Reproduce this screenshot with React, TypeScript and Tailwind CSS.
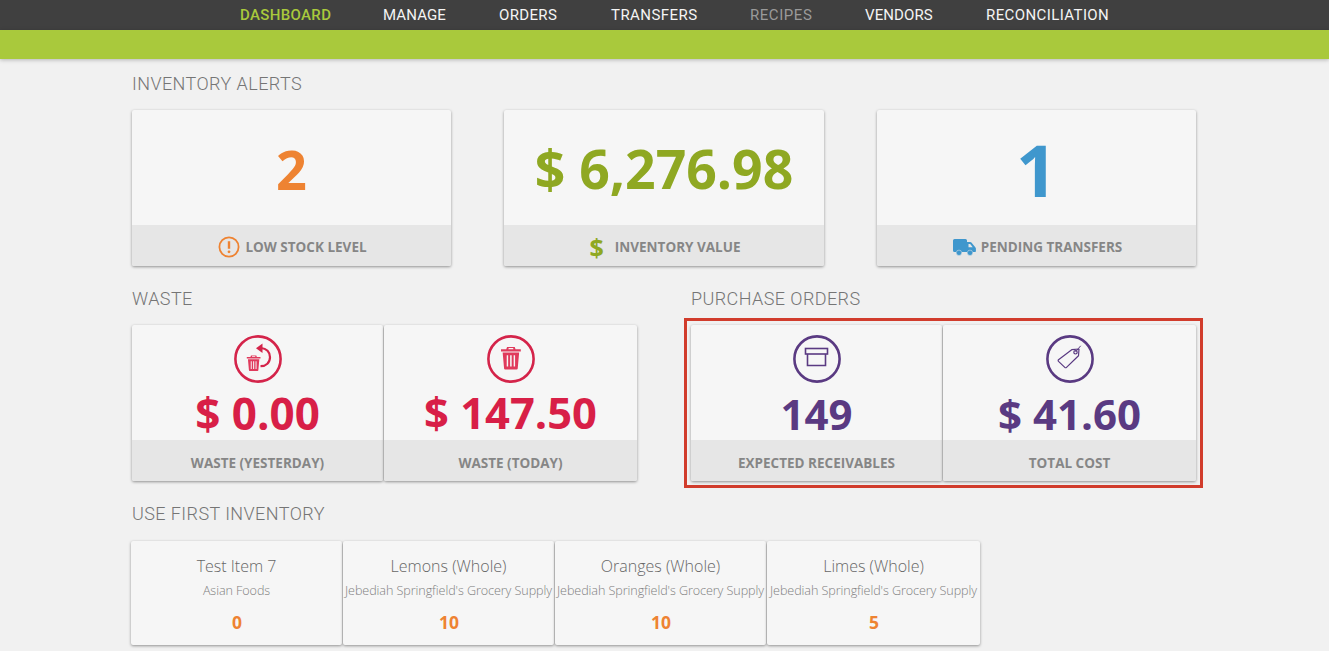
import type { ReactNode } from "react";

const navItems = [
  { label: "DASHBOARD", className: "w-[143px] text-[#a9c93c] font-medium" },
  { label: "MANAGE", className: "w-[116px] text-[#f4f4f4] tracking-[0.1px]" },
  { label: "ORDERS", className: "w-[112px] text-[#f4f4f4]" },
  { label: "TRANSFERS", className: "w-[139px] text-[#f4f4f4] tracking-[0.45px]" },
  { label: "RECIPES", className: "w-[115px] text-[#9a9a9a] tracking-[0.55px]" },
  { label: "VENDORS", className: "w-[121px] text-[#f4f4f4] tracking-[0.1px]" },
  { label: "RECONCILIATION", className: "w-[130px] text-[#f4f4f4] tracking-[0.4px]" },
];

const firstItems = [
  { name: "Test Item 7", vendor: "Asian Foods", qty: "0", width: "w-[211px]" },
  { name: "Lemons (Whole)", vendor: "Jebediah Springfield's Grocery Supply", qty: "10", width: "w-[211px]" },
  { name: "Oranges (Whole)", vendor: "Jebediah Springfield's Grocery Supply", qty: "10", width: "w-[211px]" },
  { name: "Limes (Whole)", vendor: "Jebediah Springfield's Grocery Supply", qty: "5", width: "w-[213px]" },
];

function Heading({ children }: { children: ReactNode }) {
  return (
    <h2 className="font-['Roboto',sans-serif] text-[18px] leading-[22px] font-light tracking-[0.42px] text-[#757575]">
      {children}
    </h2>
  );
}

function AlertIcon() {
  return (
    <svg width="22" height="22" viewBox="0 0 22 22" fill="none">
      <circle cx="11" cy="11" r="9.6" stroke="#ee8332" strokeWidth="1.8" />
      <path d="M11 5.2v7.6" stroke="#ee8332" strokeWidth="2.4" />
      <circle cx="11" cy="15.8" r="1.4" fill="#ee8332" />
    </svg>
  );
}

function TruckIcon() {
  return (
    <svg width="23" height="17" viewBox="0 0 23 17">
      <path
        d="M1.500 0h11A1.500 1.500 0 0 1 14 1.500V3h3.200c.5 0 .9.200 1.200.6l3.900 4.600c.4.400.6.900.6 1.400V12c0 .6-.4 1-1 1h-2a3 3 0 0 1-5.900 0H8.900A3 3 0 0 1 3 13H1.500A1.500 1.500 0 0 1 0 11.500v-10A1.500 1.500 0 0 1 1.500 0Z"
        fill="#3f97cd"
      />
      <path d="M15.500 5h1.700l2.500 3.200h-4.200Z" fill="#e6e6e6" />
      <circle cx="6" cy="13.800" r="2.700" fill="#3f97cd" stroke="#e6e6e6" strokeWidth="0.5" />
      <circle cx="17" cy="13.800" r="2.700" fill="#3f97cd" stroke="#e6e6e6" strokeWidth="0.5" />
    </svg>
  );
}

function Ring({ color, children }: { color: string; children: ReactNode }) {
  return (
    <svg width="48" height="48" viewBox="0 0 48 48" fill="none">
      <circle cx="24" cy="24" r="22.600" stroke={color} strokeWidth="2.600" />
      {children}
    </svg>
  );
}

function Bin({ x, y, s }: { x: number; y: number; s: number }) {
  return (
    <g transform={`translate(${x} ${y}) scale(${s})`} fill="#e03a5c">
      <path d="M5.500 0h7l.7 2H18v2H0V2h4.800ZM7 1l-.3 1h4.600l-.3-1Z" />
      <path d="M1.500 5h15l-1.300 14.500a1 1 0 0 1-1 .9H3.800a1 1 0 0 1-1-.9ZM5.200 7.500v10.300h1.300V7.500Zm3.100 0v10.300h1.400V7.500Zm3.200 0v10.300h1.300V7.500Z" fillRule="evenodd" />
    </g>
  );
}

function WasteBackIcon() {
  return (
    <Ring color="#d4244a">
      <Bin x={12.800} y={20.500} s={0.76} />
      <path d="M27 13c5.500.3 9 4.200 9 9.200 0 5.300-3.800 9-9.500 9" stroke="#d4244a" strokeWidth="2.200" />
      <path d="M28.500 8.500v9.600L22 13.200Z" fill="#d4244a" />
    </Ring>
  );
}

function TrashIcon() {
  return (
    <Ring color="#d4244a">
      <Bin x={14} y={12} s={1.100} />
    </Ring>
  );
}

function BoxIcon() {
  return (
    <Ring color="#5a3a82">
      <rect x="12.500" y="13.500" width="22" height="5.500" stroke="#5a3a82" strokeWidth="1.600" />
      <path d="M14.500 19v11.500h18V19" stroke="#5a3a82" strokeWidth="1.600" />
    </Ring>
  );
}

function TagIcon() {
  return (
    <Ring color="#5a3a82">
      <path
        d="M25.700 14.700l7.300-.7-.5 6.700-12 11.700a1.200 1.200 0 0 1-1.700 0l-6.300-6a1.200 1.200 0 0 1 0-1.700Z"
        stroke="#5a3a82"
        strokeWidth="1.200"
        strokeLinejoin="round"
      />
      <circle cx="29.500" cy="17.300" r="1.700" stroke="#5a3a82" strokeWidth="1.200" />
      <path d="M29.700 16.800c1.600-2 3.200-4 5-6" stroke="#5a3a82" strokeWidth="1" />
    </Ring>
  );
}

function AlertCard({ value, color, label, icon, size }: { value: string; color: string; label: string; icon: ReactNode; size: string }) {
  return (
    <div className="flex h-[156px] flex-col overflow-hidden rounded-[2px] bg-[#f6f6f6] shadow-[0_1px_3px_rgba(0,0,0,0.4)]">
      <div className={`flex flex-1 items-center justify-center pt-[3px] font-['Open_Sans',sans-serif] font-bold ${size} ${color}`}>
        {value}
      </div>
      <div className="flex h-[41px] items-center justify-center gap-[5px] bg-[#e6e6e6] pt-[3px] pl-[2px] font-['Open_Sans',sans-serif] text-[13.500px] font-bold text-[#868686]">
        {icon}
        <span>{label}</span>
      </div>
    </div>
  );
}

function StatCell({ value, color, label, icon, size }: { value: string; color: string; label: string; icon: ReactNode; size: string }) {
  return (
    <div className="flex h-[156px] flex-col overflow-hidden rounded-[2px] bg-[#f6f6f6] shadow-[0_1px_3px_rgba(0,0,0,0.4)]">
      <div className="flex flex-1 flex-col items-center pt-[10px]">
        {icon}
        <div className={`font-['Open_Sans',sans-serif] leading-[50px] font-bold ${size} ${color}`}>
          {value}
        </div>
      </div>
      <div className="flex h-[41px] items-center justify-center bg-[#e6e6e6] pt-[5px] font-['Open_Sans',sans-serif] text-[13.500px] font-bold text-[#868686]">
        {label}
      </div>
    </div>
  );
}

export default function App() {
  return (
    <div className="h-[651px] overflow-hidden bg-[#f1f1f1]">
      <nav className="flex h-[30px] items-center bg-[#404040] pt-px pl-[240px] font-['Roboto',sans-serif] text-[15px] tracking-[0.35px]">
        {navItems.map((item) => (
          <span key={item.label} className={`whitespace-nowrap ${item.className}`}>
            {item.label}
          </span>
        ))}
      </nav>
      <div className="relative h-[29px] bg-[#a9c93c] shadow-[0_1px_4px_rgba(0,0,0,0.25)]" />

      <main className="ml-[132px] w-[1064px]">
        <section className="pt-[14px]">
          <Heading>INVENTORY ALERTS</Heading>
          <div className="mt-[15px] grid grid-cols-[319px_320px_319px] gap-x-[53px]">
            <AlertCard value="2" color="text-[#ee8332]" size="text-[54px]" label="LOW STOCK LEVEL" icon={<AlertIcon />} />
            <AlertCard
              value="$ 6,276.98"
              color="text-[#8fa822]"
              size="text-[53.500px]"
              label="INVENTORY VALUE"
              icon={<span className="mr-[6px] font-['Open_Sans',sans-serif] text-[25px] leading-none font-bold text-[#8fa822]">$</span>}
            />
            <AlertCard value="1" color="text-[#3f97cd]" size="text-[72px]" label="PENDING TRANSFERS" icon={<TruckIcon />} />
          </div>
        </section>

        <div className="mt-[22px] grid grid-cols-[505px_505px] gap-x-[54px]">
          <section>
            <Heading>WASTE</Heading>
            <div className="mt-[15px] grid grid-cols-[251px_253px] gap-x-px">
              <StatCell value="$ 0.00" color="text-[#d81f47]" size="text-[44px] pt-[5px]" label="WASTE (YESTERDAY)" icon={<WasteBackIcon />} />
              <StatCell value="$ 147.50" color="text-[#d81f47]" size="text-[43.500px] pt-[5px]" label="WASTE (TODAY)" icon={<TrashIcon />} />
            </div>
          </section>
          <section>
            <Heading>PURCHASE ORDERS</Heading>
            <div className="relative mt-[15px] grid grid-cols-[251px_253px] gap-x-px">
              <StatCell value="149" color="text-[#5a3a82]" size="text-[42px] pt-[6px]" label="EXPECTED RECEIVABLES" icon={<BoxIcon />} />
              <StatCell value="$ 41.60" color="text-[#5a3a82]" size="text-[42px] pt-[6px]" label="TOTAL COST" icon={<TagIcon />} />
              <div className="absolute top-[-7px] right-[-7px] bottom-[-7px] left-[-7px] border-[3px] border-[#d13c2c]" />
            </div>
          </section>
        </div>

        <section className="mt-[22px]">
          <Heading>USE FIRST INVENTORY</Heading>
          <div className="mt-[16px] -ml-px flex gap-x-px">
            {firstItems.map((item) => (
              <div
                key={item.name}
                className={`flex h-[104px] flex-col items-center rounded-[2px] bg-[#f6f6f6] pt-[15px] font-['Open_Sans',sans-serif] shadow-[0_1px_3px_rgba(0,0,0,0.4)] ${item.width}`}
              >
                <div className="text-[16px] leading-[20px] font-light text-[#666666]">{item.name}</div>
                <div className="mt-[7px] text-[12.600px] leading-[16px] font-light tracking-[-0.08px] whitespace-nowrap text-[#808080]">{item.vendor}</div>
                <div className="mt-[12px] pl-px text-[17.500px] leading-[22px] font-bold text-[#ee8332]">{item.qty}</div>
              </div>
            ))}
          </div>
        </section>
      </main>
    </div>
  );
}
